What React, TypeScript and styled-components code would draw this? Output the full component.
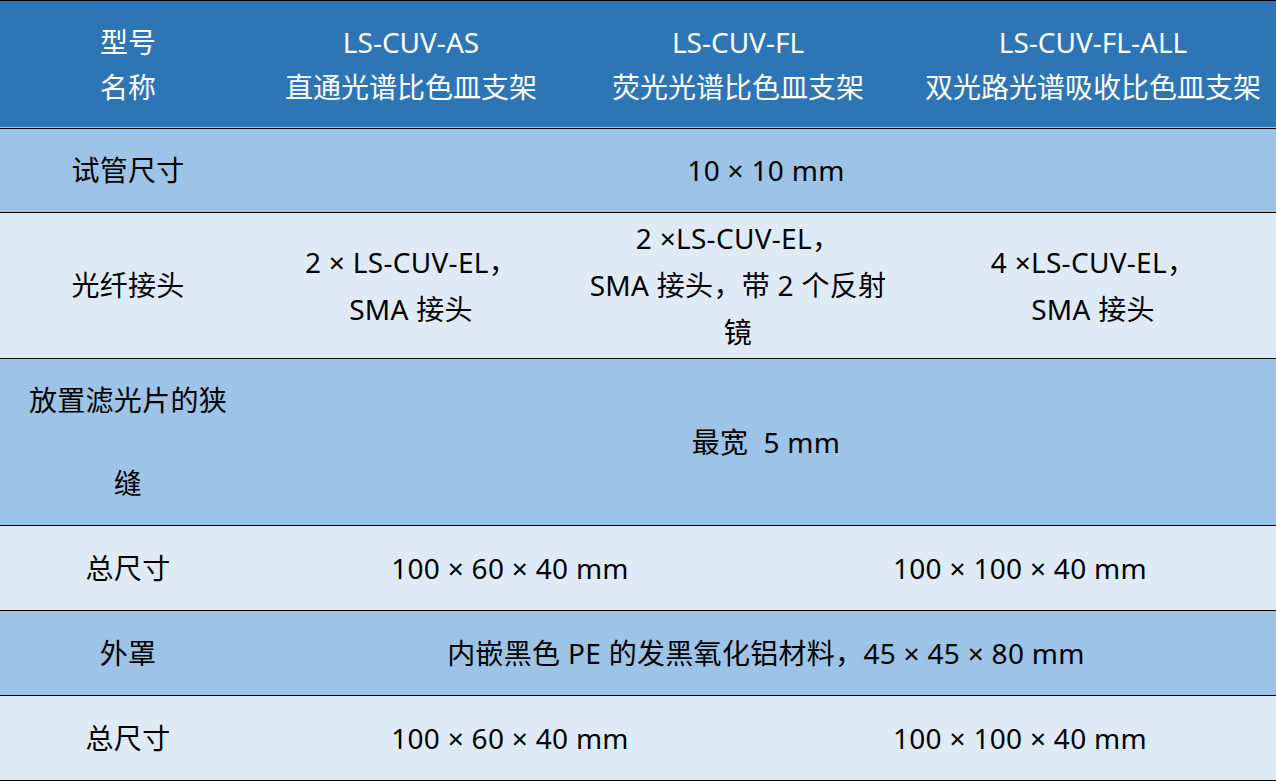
import React from "react";
import styled, { createGlobalStyle } from "styled-components";

const GlobalStyle = createGlobalStyle`
  html, body {
    margin: 0;
    padding: 0;
    background: #ffffff;
  }
  body {
    font-family: "Noto Sans", "Noto Sans CJK SC", sans-serif;
  }
`;

const cols = {
  four: "256px 310px 344px 1fr",
  two: "256px 508px 1fr",
  one: "256px 1fr",
};

type ColKey = keyof typeof cols;

const Table = styled.div`
  width: 1276px;
  display: flex;
  flex-direction: column;
  border-top: 1px solid #000;
`;

const Row = styled.div<{ $cols: ColKey; $bg: string; $h: number }>`
  display: grid;
  grid-template-columns: ${(p) => cols[p.$cols]};
  min-height: ${(p) => p.$h}px;
  background: ${(p) => p.$bg};
  border-bottom: 1px solid #000;
  box-sizing: border-box;
`;

const HeadRow = styled(Row)`
  color: #ffffff;
  box-shadow: inset 0 -1px 0 #a9c6e4;
`;

const Cell = styled.div<{ $lh?: number }>`
  display: flex;
  flex-direction: column;
  align-items: center;
  justify-content: center;
  text-align: center;
  font-size: 28px;
  line-height: ${(p) => p.$lh ?? 47}px;
  color: inherit;
  white-space: pre;
  padding: 0 10px;
`;

const BodyText = styled.span`
  color: #000;
  letter-spacing: 0.3px;
`;

const blue = "#9dc3e6";
const pale = "#deebf7";

const Lines: React.FC<{ lines: string[] }> = ({ lines }) => (
  <>
    {lines.map((l, i) => (
      <BodyText key={i}>{l}</BodyText>
    ))}
  </>
);

export default function App() {
  return (
    <>
      <GlobalStyle />
      <Table>
        <HeadRow $cols="four" $bg="#2e75b6" $h={128}>
          <Cell $lh={45}>
            <span>型号</span>
            <span>名称</span>
          </Cell>
          <Cell $lh={45}>
            <span>LS-CUV-AS</span>
            <span>直通光谱比色皿支架</span>
          </Cell>
          <Cell $lh={45}>
            <span>LS-CUV-FL</span>
            <span>荧光光谱比色皿支架</span>
          </Cell>
          <Cell $lh={45}>
            <span>LS-CUV-FL-ALL</span>
            <span>双光路光谱吸收比色皿支架</span>
          </Cell>
        </HeadRow>

        <Row $cols="one" $bg={blue} $h={84}>
          <Cell><Lines lines={["试管尺寸"]} /></Cell>
          <Cell><Lines lines={["10 × 10 mm"]} /></Cell>
        </Row>

        <Row $cols="four" $bg={pale} $h={146}>
          <Cell><Lines lines={["光纤接头"]} /></Cell>
          <Cell><Lines lines={["2 × LS-CUV-EL，", "SMA 接头"]} /></Cell>
          <Cell><Lines lines={["2 ×LS-CUV-EL，", "SMA 接头，带 2 个反射", "镜"]} /></Cell>
          <Cell><Lines lines={["4 ×LS-CUV-EL，", "SMA 接头"]} /></Cell>
        </Row>

        <Row $cols="one" $bg={blue} $h={167}>
          <Cell $lh={83}><Lines lines={["放置滤光片的狭", "缝"]} /></Cell>
          <Cell><Lines lines={["最宽  5 mm"]} /></Cell>
        </Row>

        <Row $cols="two" $bg={pale} $h={85}>
          <Cell><Lines lines={["总尺寸"]} /></Cell>
          <Cell><Lines lines={["100 × 60 × 40 mm"]} /></Cell>
          <Cell><Lines lines={["100 × 100 × 40 mm"]} /></Cell>
        </Row>

        <Row $cols="one" $bg={blue} $h={85}>
          <Cell><Lines lines={["外罩"]} /></Cell>
          <Cell><Lines lines={["内嵌黑色 PE 的发黑氧化铝材料，45 × 45 × 80 mm"]} /></Cell>
        </Row>

        <Row $cols="two" $bg={pale} $h={85}>
          <Cell><Lines lines={["总尺寸"]} /></Cell>
          <Cell><Lines lines={["100 × 60 × 40 mm"]} /></Cell>
          <Cell><Lines lines={["100 × 100 × 40 mm"]} /></Cell>
        </Row>
      </Table>
    </>
  );
}
